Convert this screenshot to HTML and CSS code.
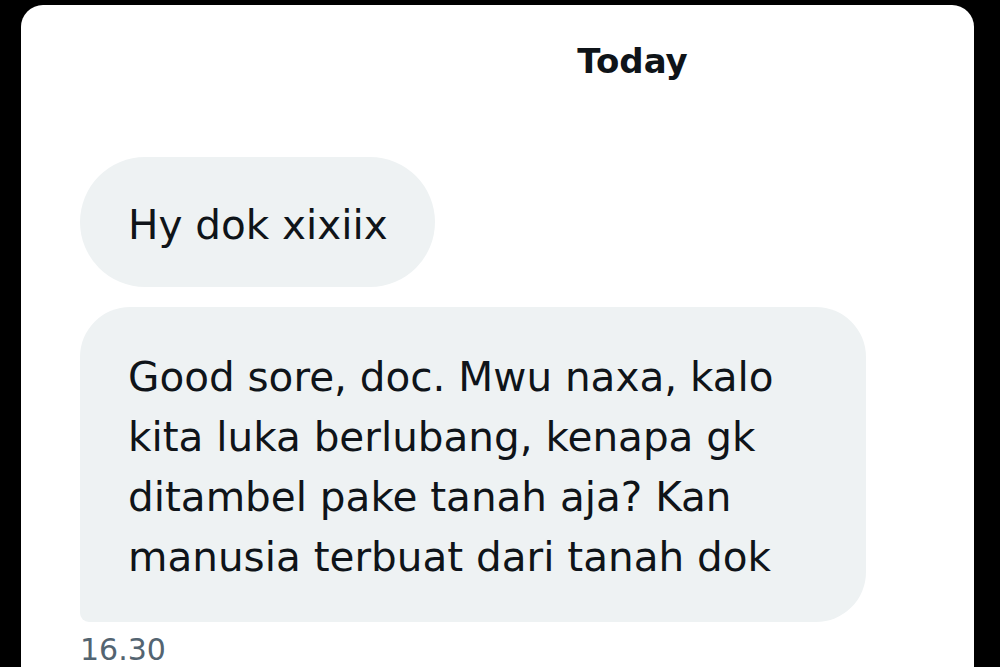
FILE: index.html
```html
<!DOCTYPE html>
<html lang="id">
<head>
<meta charset="utf-8">
<title>Today</title>
<link rel="stylesheet" href="styles.css">
</head>
<body>
  <main class="card">
    <div class="day">Today</div>
    <div class="thread">
      <div class="bubble bubble-short">Hy dok xixiix</div>
      <div class="bubble bubble-long">Good sore, doc. Mwu naxa, kalo<br>kita luka berlubang, kenapa gk<br>ditambel pake tanah aja? Kan<br>manusia terbuat dari tanah dok</div>
      <div class="time">16.30</div>
    </div>
  </main>
</body>
</html>
```

FILE: styles.css
```css
html, body {
  margin: 0;
  padding: 0;
  background: #000;
  height: 100%;
  overflow: hidden;
}

body {
  font-family: "DejaVu Sans", "Liberation Sans", sans-serif;
  color: #0f1419;
}

.card {
  box-sizing: border-box;
  margin: 5px 0 0 21px;
  width: 953px;
  height: 720px;
  background: #fff;
  border-radius: 22px 22px 0 0;
  padding-top: 36px;
}

.day {
  font-weight: bold;
  font-size: 34px;
  line-height: 40px;
  text-align: center;
  padding-left: 270px;
}

.thread {
  display: flex;
  flex-direction: column;
  align-items: flex-start;
  gap: 20px;
  padding-left: 59px;
  margin-top: 76px;
}

.bubble {
  box-sizing: border-box;
  background: #eef2f3;
  font-size: 40.5px;
  line-height: 60px;
  padding-left: 48px;
}

.bubble-short {
  width: 355px;
  height: 130px;
  border-radius: 65px;
  display: flex;
  align-items: center;
  padding-top: 5px;
}

.bubble-long {
  width: 786px;
  height: 315px;
  border-radius: 50px 50px 50px 9px;
  padding-top: 40px;
}

.time {
  font-size: 30px;
  line-height: 36px;
  color: #536471;
  margin-top: -10px;
}
```
